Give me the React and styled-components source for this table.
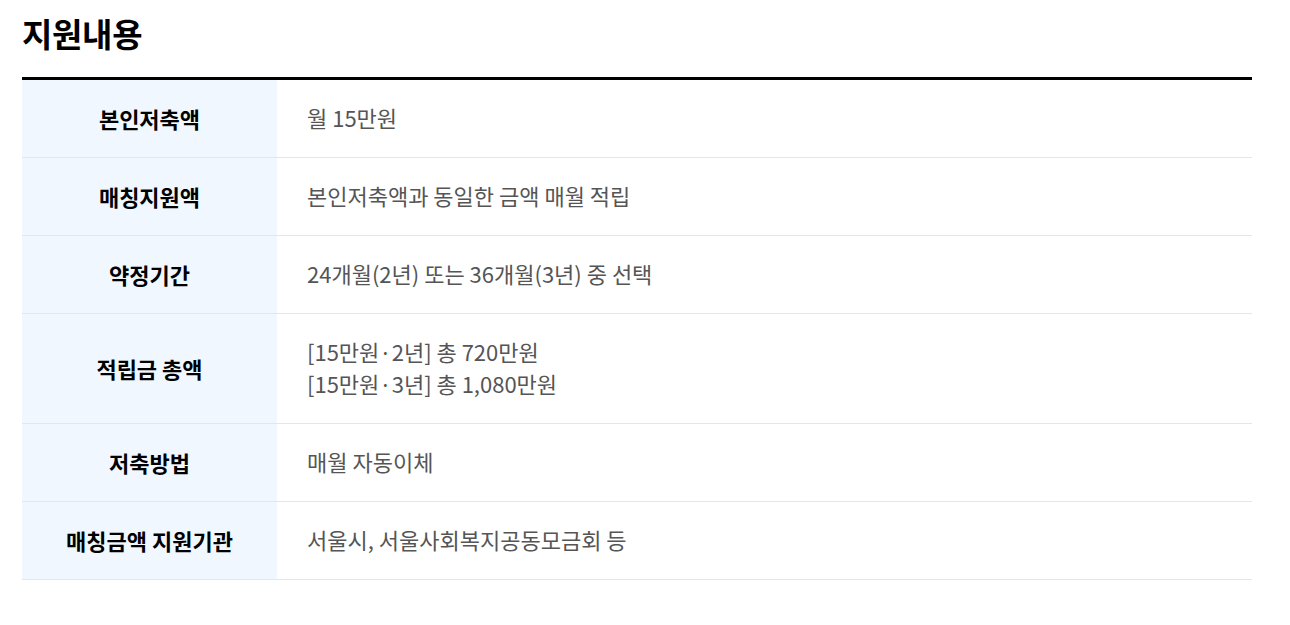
import React from "react";
import styled, { createGlobalStyle } from "styled-components";

const Global = createGlobalStyle`
  html, body { margin: 0; padding: 0; background: #fff; }
  body { font-family: "Noto Sans CJK KR", "Noto Sans", sans-serif; }
`;

const Page = styled.div`
  width: 1230px;
  padding: 13px 0 0 22px;
`;

const Title = styled.h2`
  margin: 0 0 24px;
  font-size: 33px;
  line-height: 40px;
  font-weight: 700;
  color: #000;
  letter-spacing: -0.3px;
`;

const Table = styled.div`
  border-top: 3px solid #000;
  display: grid;
  grid-template-columns: 255px 1fr;
`;

const HeadCell = styled.div`
  background: #f0f7ff;
  border-bottom: 1px solid #e6e6e6;
  padding-bottom: 2px;
  display: flex;
  align-items: center;
  justify-content: center;
  font-size: 22px;
  font-weight: 700;
  color: #000;
  line-height: 32px;
`;

const ValueCell = styled.div`
  border-bottom: 1px solid #e6e6e6;
  padding: 21px 0 24px 30px;
  font-size: 22px;
  line-height: 32px;
  color: #555;
  display: flex;
  flex-direction: column;
  justify-content: center;
`;

const rows = [
  ["본인저축액", ["월 15만원"]],
  ["매칭지원액", ["본인저축액과 동일한 금액 매월 적립"]],
  ["약정기간", ["24개월(2년) 또는 36개월(3년) 중 선택"]],
  ["적립금 총액", ["[15만원·2년] 총 720만원", "[15만원·3년] 총 1,080만원"]],
  ["저축방법", ["매월 자동이체"]],
  ["매칭금액 지원기관", ["서울시, 서울사회복지공동모금회 등"]],
];

export default function App() {
  return (
    <>
      <Global />
      <Page>
        <Title>지원내용</Title>
        <Table>
          {rows.map(([h, vals]) => (
            <React.Fragment key={h}>
              <HeadCell>{h}</HeadCell>
              <ValueCell>
                {vals.map((v) => (
                  <span key={v}>{v}</span>
                ))}
              </ValueCell>
            </React.Fragment>
          ))}
        </Table>
      </Page>
    </>
  );
}
